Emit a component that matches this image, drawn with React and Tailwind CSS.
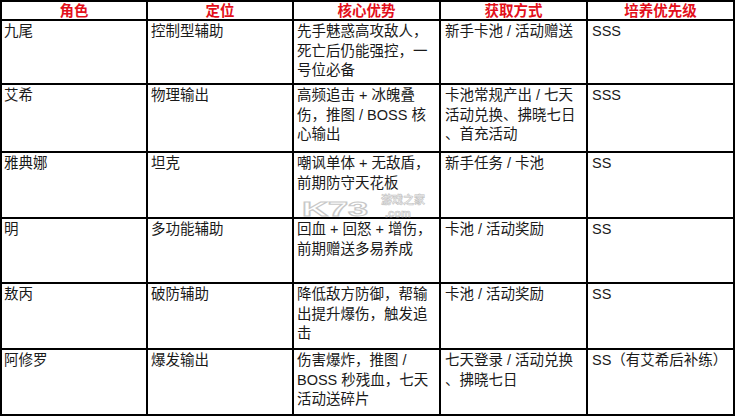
import React from "react";

const headers = ["角色", "定位", "核心优势", "获取方式", "培养优先级"];

const rows = [
  {
    h: "h-[64px]",
    cells: [["九尾"], ["控制型辅助"], ["先手魅惑高攻敌人，", "死亡后仍能强控，一", "号位必备"], ["新手卡池 / 活动赠送"], ["SSS"]],
  },
  {
    h: "h-[68px]",
    cells: [["艾希"], ["物理输出"], ["高频追击 + 冰魄叠", "伤，推图 / BOSS 核", "心输出"], ["卡池常规产出 / 七天", "活动兑换、拂晓七日", "、首充活动"], ["SSS"]],
  },
  {
    h: "h-[66px]",
    cells: [["雅典娜"], ["坦克"], ["嘲讽单体 + 无敌盾，", "前期防守天花板"], ["新手任务 / 卡池"], ["SS"]],
  },
  {
    h: "h-[65px]",
    cells: [["明"], ["多功能辅助"], ["回血 + 回怒 + 增伤，", "前期赠送多易养成"], ["卡池 / 活动奖励"], ["SS"]],
  },
  {
    h: "h-[66px]",
    cells: [["敖丙"], ["破防辅助"], ["降低敌方防御，帮输", "出提升爆伤，触发追", "击"], ["卡池 / 活动奖励"], ["SS"]],
  },
  {
    h: "h-[66px]",
    cells: [["阿修罗"], ["爆发输出"], ["伤害爆炸，推图 /", "BOSS 秒残血，七天", "活动送碎片"], ["七天登录 / 活动兑换", "、拂晓七日"], ["SS（有艾希后补练）"]],
  },
];

const pads = ["pl-[2px]", "pl-[3px]", "pl-[3px]", "pl-[4px]", "pl-[4px]"];

export default function App() {
  return (
    <div className="w-[736px] h-[417px] bg-white overflow-hidden font-['Liberation_Sans','Noto_Sans_CJK_SC',sans-serif] text-[14.5px] text-[#1a1a1a]">
      <div className="relative">
        <div className="grid grid-cols-[146px_146px_147px_147px_147px] w-[735px] border-l-2 border-t-2 border-black">
          {headers.map((t) => (
            <div
              key={t}
              className="h-[19px] border-r-2 border-b-2 border-black flex items-center justify-center pt-[1px] font-bold text-[#e3101b] leading-[17px]"
            >
              {t}
            </div>
          ))}
          {rows.map((r, i) =>
            r.cells.map((lines, j) => (
              <div
                key={i + "-" + j}
                className={`${r.h} border-r-2 border-b-2 border-black pt-[1px] ${pads[j]} leading-[19.5px]`}
              >
                {lines.map((l, k) => (
                  <div key={k} className="whitespace-nowrap">
                    {l}
                  </div>
                ))}
              </div>
            ))
          )}
        </div>

        {/* watermark over the table */}
        <div className="absolute left-[302px] top-[194px] flex items-end pointer-events-none select-none">
          <span className="inline-block w-[79px] origin-left scale-x-[1.8] text-[20px] leading-[20px] font-bold text-white [-webkit-text-stroke:1px_#c8c8c8]">
            K73
          </span>
          <div className="flex flex-col gap-[1px]">
            <span className="text-[11px] leading-[13px] font-bold text-[#ececec] [-webkit-text-stroke:0.5px_#c0c0c0]">
              游戏之家
            </span>
            <span className="ml-[4px] text-[11px] leading-[11px] font-bold text-[#ececec] [-webkit-text-stroke:0.5px_#c0c0c0]">
              .com
            </span>
          </div>
        </div>
      </div>
    </div>
  );
}
